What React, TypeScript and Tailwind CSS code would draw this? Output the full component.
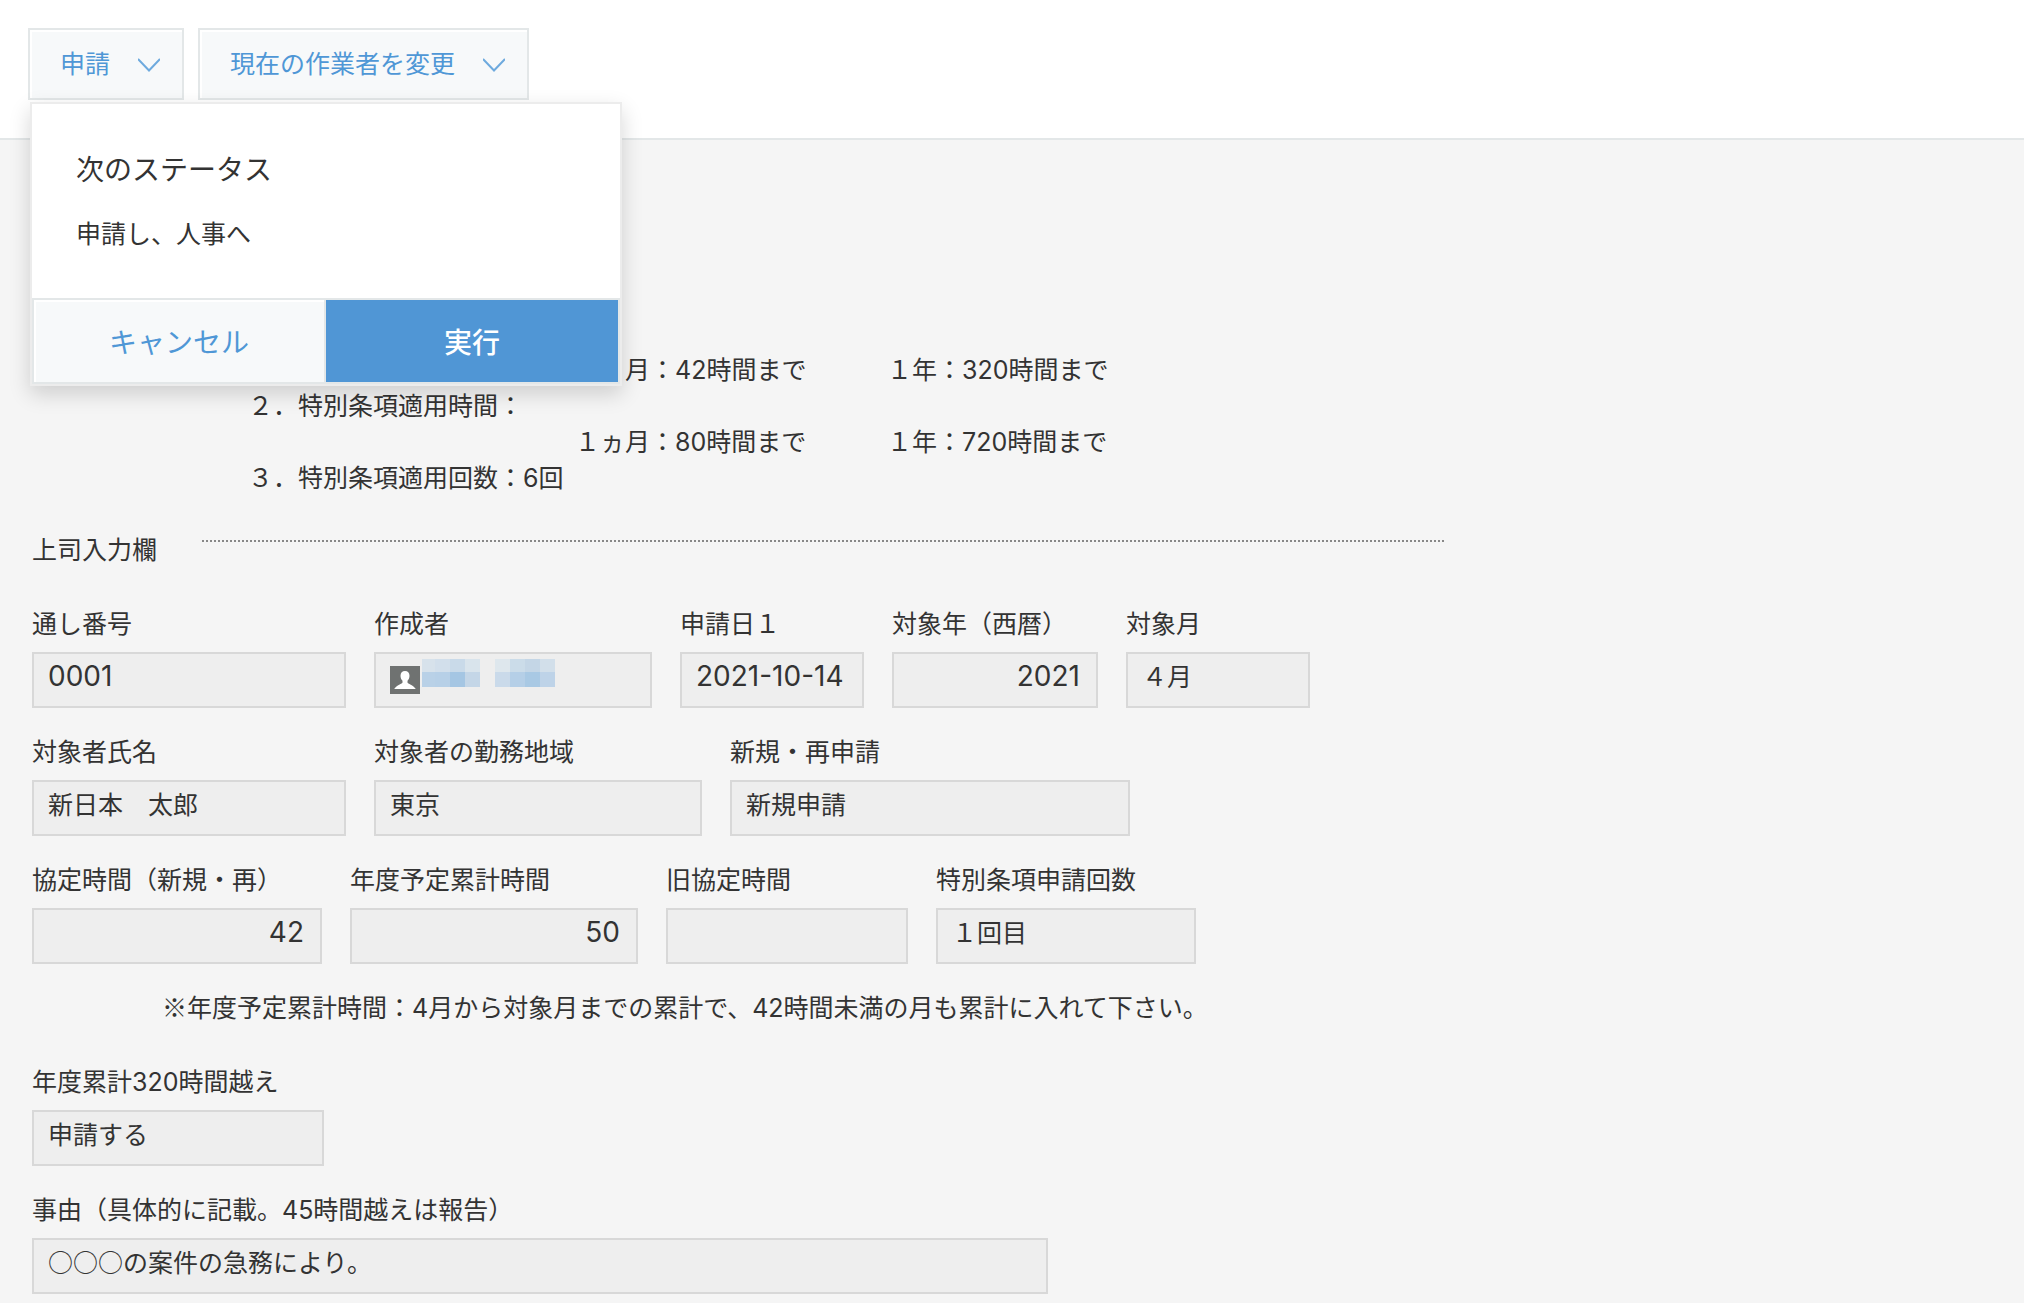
import { useState } from "react";
import clsx from "clsx";

type FieldData = {
  id: string;
  label: string;
  value: string;
  width: string;
  kind?: "text" | "number" | "date" | "user";
};

const ROWS: FieldData[][] = [
  [
    { id: "serial", label: "通し番号", value: "0001", width: "w-[314px]", kind: "date" },
    { id: "creator", label: "作成者", value: "", width: "w-[278px]", kind: "user" },
    { id: "date", label: "申請日１", value: "2021-10-14", width: "w-[184px]", kind: "date" },
    { id: "year", label: "対象年（西暦）", value: "2021", width: "w-[206px]", kind: "number" },
    { id: "month", label: "対象月", value: "４月", width: "w-[184px]" },
  ],
  [
    { id: "name", label: "対象者氏名", value: "新日本　太郎", width: "w-[314px]" },
    { id: "area", label: "対象者の勤務地域", value: "東京", width: "w-[328px]" },
    { id: "type", label: "新規・再申請", value: "新規申請", width: "w-[400px]" },
  ],
  [
    { id: "hours", label: "協定時間（新規・再）", value: "42", width: "w-[290px]", kind: "number" },
    { id: "total", label: "年度予定累計時間", value: "50", width: "w-[288px]", kind: "number" },
    { id: "old", label: "旧協定時間", value: "", width: "w-[242px]", kind: "number" },
    { id: "count", label: "特別条項申請回数", value: "１回目", width: "w-[260px]" },
  ],
];

const EXTRA_ROWS: FieldData[][] = [
  [{ id: "over", label: "年度累計320時間越え", value: "申請する", width: "w-[292px]" }],
  [
    {
      id: "reason",
      label: "事由（具体的に記載。45時間越えは報告）",
      value: "○○○の案件の急務により。",
      width: "w-[1016px]",
    },
  ],
];

function Chevron() {
  return (
    <svg width="22" height="14" viewBox="0 0 22 14" fill="none" className="mt-[2px]" aria-hidden>
      <path d="M0 1 11 12.500 22 1" stroke="#6eaade" strokeWidth="2" />
    </svg>
  );
}

function UserIcon() {
  return (
    <svg width="30" height="28" viewBox="0 0 30 28" aria-hidden>
      <rect width="30" height="28" fill="#6f7271" />
      <path
        d="M15 5c-2.800 0-4.500 2-4.500 4.800 0 2.200.8 3.800 2 5v1.700c0 1.300-6 2.600-8.300 6.500h21.600c-2.300-3.900-8.300-5.200-8.300-6.500v-1.700c1.200-1.200 2-2.800 2-5C19.500 7 17.800 5 15 5z"
        fill="#fff"
      />
    </svg>
  );
}

// pixelated user name
function MaskedName() {
  return (
    <svg width="134" height="28" viewBox="0 0 134 28" shapeRendering="crispEdges" aria-hidden>
      <path d="M0 0h13v13H0z" fill="#d7e2eb" />
      <path d="M13 0h15v13H13z" fill="#d2dfeb" />
      <path d="M28 0h15v13H28z" fill="#c9dae9" />
      <path d="M43 0h15v13H43z" fill="#d9e4ec" />
      <path d="M0 13h13v15H0z" fill="#b9d1e7" />
      <path d="M13 13h15v15H13z" fill="#b7d0e7" />
      <path d="M28 13h15v15H28z" fill="#a5c6e3" />
      <path d="M43 13h15v15H43z" fill="#c4d6e7" />
      <path d="M73 0h15v13H73z" fill="#dee7ed" />
      <path d="M88 0h15v13H88z" fill="#cbdce9" />
      <path d="M103 0h15v13H103z" fill="#c4d6e6" />
      <path d="M118 0h15v13H118z" fill="#d2dfea" />
      <path d="M73 13h15v15H73z" fill="#cadaea" />
      <path d="M88 13h15v15H88z" fill="#b5cfe7" />
      <path d="M103 13h15v15H103z" fill="#a9c9e4" />
      <path d="M118 13h15v15H118z" fill="#bed3e8" />
    </svg>
  );
}

function Field({ id, label, value, width, kind = "text" }: FieldData) {
  const box = "h-14 w-full border-2 border-[#d8d8d8] bg-[#eeeeee]";
  if (kind === "user") {
    return (
      <div className={width}>
        <div className="mb-[10px]">{label}</div>
        <div className={clsx(box, "flex items-start gap-[2px] px-[14px]")}>
          <span className="mt-3">
            <UserIcon />
          </span>
          <span className="mt-[5px]">
            <MaskedName />
          </span>
        </div>
      </div>
    );
  }
  return (
    <div className={width}>
      <label htmlFor={id} className="mb-[10px] block whitespace-nowrap">
        {label}
      </label>
      <input
        id={id}
        readOnly
        value={value}
        className={clsx(
          box,
          "block outline-none",
          kind === "text" ? "px-[14px] pb-[10px] font-['Noto_Sans_CJK_JP',sans-serif]" : "pb-2 text-[28px]",
          kind === "date" && "px-[14px]",
          kind === "number" && "px-4 text-right",
        )}
      />
    </div>
  );
}

function FieldRow({ fields }: { fields: FieldData[] }) {
  return (
    <div className="flex gap-7">
      {fields.map((field) => (
        <Field key={field.id} {...field} />
      ))}
    </div>
  );
}

function Limits({ month, year }: { month: string; year: string }) {
  return (
    <p className="flex pl-[327px]">
      <span className="w-[312px]">{month}</span>
      <span>{year}</span>
    </p>
  );
}

function StatusPopup({ onClose }: { onClose: () => void }) {
  return (
    <div className="absolute left-[2px] top-[74px] z-10 w-[592px] border-2 border-[#ececec] bg-white shadow-[0_8px_20px_rgba(0,0,0,0.16)]">
      <div className="px-11 pb-[46px] pt-[46px]">
        <h2 className="text-[28px] leading-10">次のステータス</h2>
        <p className="mt-[26px]">申請し、人事へ</p>
      </div>
      <div className="grid grid-cols-2 border-2 border-[#e3e7e8] text-[28px]">
        <button
          type="button"
          onClick={onClose}
          className="h-[82px] border-r-2 border-[#e3e7e8] bg-[#f7f9fa] pt-1 text-[#4f97d6] shadow-[inset_2px_2px_0_#fff]"
        >
          キャンセル
        </button>
        <button type="button" onClick={onClose} className="h-[82px] bg-[#5096d5] pt-1 font-medium text-white">
          実行
        </button>
      </div>
    </div>
  );
}

const ACTION_BUTTON =
  "flex h-[72px] items-center gap-7 border-2 border-[#e3e7e8] bg-[#f7f9fa] pl-[30px] pr-[22px] text-[#4f97d6] shadow-[inset_2px_2px_0_#fff]";

export default function App() {
  const [open, setOpen] = useState(true);

  return (
    <div className="min-h-screen bg-[#f5f5f5] font-['Inter','Noto_Sans_CJK_JP',sans-serif] text-[25px] leading-9 text-[#333333]">
      <header className="h-[140px] border-b-2 border-[#e3e7e8] bg-white px-7 pt-7">
        <div className="relative flex gap-[14px]">
          <button type="button" onClick={() => setOpen(!open)} className={ACTION_BUTTON}>
            申請
            <Chevron />
          </button>
          <button type="button" className={ACTION_BUTTON}>
            現在の作業者を変更
            <Chevron />
          </button>
          {open && <StatusPopup onClose={() => setOpen(false)} />}
        </div>
      </header>

      <main className="px-8 pt-[212px]">
        <div className="pl-[216px]">
          <Limits month="１ヵ月：42時間まで" year="１年：320時間まで" />
          <p>２．特別条項適用時間：</p>
          <Limits month="１ヵ月：80時間まで" year="１年：720時間まで" />
          <p>３．特別条項適用回数：6回</p>
        </div>

        <div className="mt-9 flex items-start">
          <h2 className="w-[170px]">上司入力欄</h2>
          <hr className="mt-2 w-[1242px] border-t-2 border-dotted border-[#888888]" />
        </div>

        <form className="mt-[38px] flex flex-col gap-[26px]">
          {ROWS.map((fields) => (
            <FieldRow key={fields[0].id} fields={fields} />
          ))}
          <p className="pb-3 pl-[130px]">
            <span className="font-['Noto_Sans_CJK_JP',sans-serif] leading-none">※</span>
            年度予定累計時間：4月から対象月までの累計で、42時間未満の月も累計に入れて下さい。
          </p>
          {EXTRA_ROWS.map((fields) => (
            <FieldRow key={fields[0].id} fields={fields} />
          ))}
        </form>
      </main>
    </div>
  );
}
